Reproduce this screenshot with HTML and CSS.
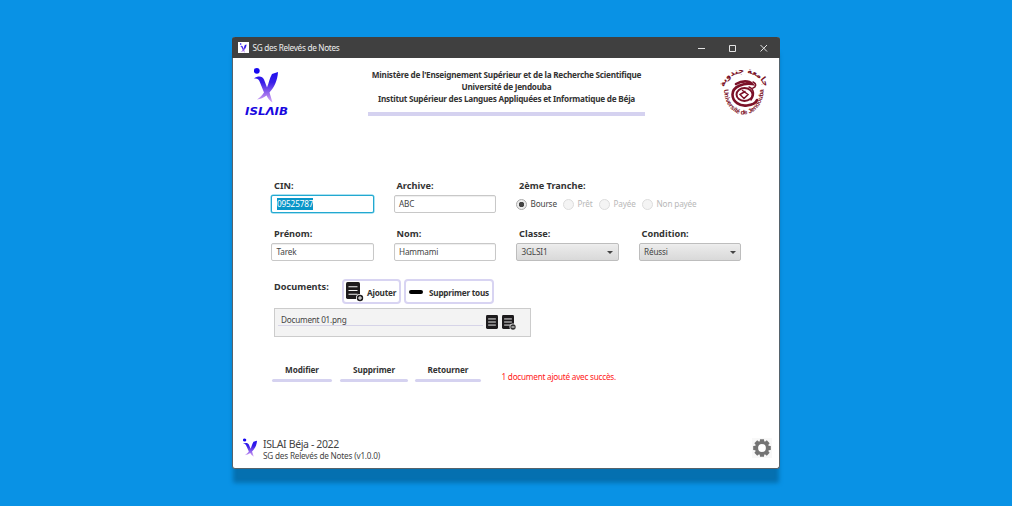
FILE: index.html
```html
<!DOCTYPE html>
<html lang="fr">
<head>
<meta charset="utf-8">
<title>SG des Relevés de Notes</title>
<link rel="stylesheet" href="styles.css">
</head>
<body>
<svg class="defs" width="0" height="0">
  <defs>
    <linearGradient id="fade" gradientUnits="userSpaceOnUse" x1="0" y1="2" x2="0" y2="36">
      <stop offset="0" stop-color="#1608f0"/><stop offset=".4" stop-color="#3a20e8"/><stop offset=".75" stop-color="#a070ee"/><stop offset="1" stop-color="#dcb4f6"/>
    </linearGradient>
    <symbol id="figure" viewBox="0 0 26 36">
      <circle cx="2.800" cy="3.800" r="2.900" fill="#1608f0"/>
      <path fill="url(#fade)" d="M0 11.500C4 8.500 8.500 9 10 12.500L13 20.500C15 16 15.500 11 18 7L24 5C23.500 14 20 20.500 15.500 25.500L18.500 35.500C15.500 33.500 13.500 31 12.500 28.500C9.500 31 6.500 32 3 32.500C6.500 30 8.500 28 10 25.500L6 15.500C5 12 3.500 11.200 0 11.500Z"/>
    </symbol>
    <symbol id="doc" viewBox="0 0 14 16" preserveAspectRatio="none">
      <rect width="14" height="16" rx="1.600" fill="#1d1b1d"/>
      <path d="M2.500 4.500H11.500M2.500 8H11.500M2.500 11.500H11.500" stroke="#f2f2f2" stroke-width="1.100"/>
    </symbol>
  </defs>
</svg>
<main class="window">
  <header class="titlebar">
    <span class="app-icon"><svg width="9" height="10"><use href="#figure"/></svg></span>
    <span class="title">SG des Relevés de Notes</span>
    <svg class="controls" width="72" height="10" fill="none" stroke="#e4e4e4"><path d="M1 5.500H8M32.500 2.500H38.500V8.500H32.500ZM63.500 2L70 8.500M70 2L63.500 8.500"/></svg>
  </header>
  <section class="banner">
    <div class="brand">
      <svg width="26" height="36"><use href="#figure"/></svg>
      <svg width="46" height="12"><text x="1" y="10" textLength="43" lengthAdjust="spacingAndGlyphs" class="wordmark">ISLΛIB</text></svg>
    </div>
    <div class="heading">
      <p>Ministère de l'Enseignement Supérieur et de la Recherche Scientifique</p>
      <p>Université de Jendouba</p>
      <p>Institut Supérieur des Langues Appliquées et Informatique de Béja</p>
    </div>
    <svg class="seal" width="44" height="52" viewBox="0 0 44 52">
      <defs>
        <path id="top-arc" d="M2 22A20 16 0 0 1 42 22"/>
        <path id="bottom-arc" d="M2 23A19.800 24.500 0 0 0 41.600 23"/>
      </defs>
      <text class="arabic"><textPath href="#top-arc" startOffset="50%" text-anchor="middle">جامعة جندوبة</textPath></text>
      <text class="latin"><textPath href="#bottom-arc" startOffset="50%" text-anchor="middle">Université de Jendouba</textPath></text>
      <g fill="none" stroke="#7b1128" stroke-linecap="round">
        <path stroke-width="2.600" d="M14 17C20 13.500 27 13.500 30 17C22 16 10.500 19 10.500 27.500C10.500 35 18 39.500 25 38.500C30 38 34 35.500 35 33"/>
        <ellipse cx="22.500" cy="27.500" rx="8" ry="6.500" stroke-width="2"/>
        <path stroke-width="1.500" d="M20.500 23.500L26 27.500L22 31.500L18 27.500L23 24.500M27 20C32 22 33 28 29 33M31 15C35 17 34 20 31 21"/>
      </g>
    </svg>
  </section>
  <section class="form">
    <div class="grid top">
      <div class="field"><label>CIN:</label><div class="input focus"><mark>09525787</mark></div></div>
      <div class="field"><label>Archive:</label><div class="input">ABC</div></div>
      <div class="field wide"><label>2ème Tranche:</label>
        <div class="radios">
          <span class="radio on"><i></i>Bourse</span><span class="radio pret"><i></i>Prêt</span><span class="radio payee"><i></i>Payée</span><span class="radio non"><i></i>Non payée</span>
        </div>
      </div>
    </div>
    <div class="grid">
      <div class="field"><label>Prénom:</label><div class="input">Tarek</div></div>
      <div class="field"><label>Nom:</label><div class="input">Hammami</div></div>
      <div class="field"><label>Classe:</label><div class="select">3GLSI1</div></div>
      <div class="field"><label>Condition:</label><div class="select">Réussi</div></div>
    </div>
    <div class="docs">
      <label>Documents:</label>
      <button class="add"><svg width="18" height="20"><use href="#doc" width="14" height="17"/><circle cx="14" cy="16" r="4" fill="#fff"/><circle cx="14" cy="16" r="3.200" fill="#1d1b1d"/><path d="M12 16H16M14 14V18" stroke="#fff"/></svg><span>Ajouter</span></button>
      <button class="clear"><i></i><span>Supprimer tous</span></button>
    </div>
    <div class="list">
      <span class="file">Document 01.png</span>
      <svg width="12" height="14"><use href="#doc"/></svg>
      <svg width="15" height="15"><use href="#doc" width="12" height="14"/><circle cx="11" cy="12" r="3.500" fill="#f3f3f3"/><circle cx="11" cy="12" r="2.700" fill="#333"/><path d="M9.500 12H12.500" stroke="#fff"/></svg>
    </div>
    <div class="actions">
      <button class="a1">Modifier</button><button class="a2">Supprimer</button><button class="a3">Retourner</button>
      <span class="status">1 document ajouté avec succès.</span>
    </div>
  </section>
  <footer>
    <svg width="14" height="19" viewBox="0 0 24 36" preserveAspectRatio="none"><use href="#figure" width="26" height="36"/></svg>
    <div class="about"><p class="org">ISLAI Béja - 2022</p><p class="version">SG des Relevés de Notes (v1.0.0)</p></div>
    <svg class="gear" width="20" height="20" viewBox="-10 -10 20 20"><rect x="-10" y="-10" width="20" height="20" fill="#f8f8f8"/><g fill="#747474"><path id="teeth" d="M-2-8.800H2L3 0L2 8.800H-2L-3 0Z"/><use href="#teeth" transform="rotate(45)"/><use href="#teeth" transform="rotate(90)"/><use href="#teeth" transform="rotate(135)"/><circle r="7"/></g><circle r="3.900" fill="#fff"/></svg>
  </footer>
</main>
</body>
</html>
```
FILE: styles.css
```css
* { box-sizing: border-box; }
body { margin: 0; height: 506px; padding: 37px 0 0 232px; background: #0992e5; font: 8.2px/12px "Noto Sans", "Open Sans", sans-serif; color: #444; overflow: hidden; }
p { margin: 0; }
.defs { display: block; height: 0; }
.window { width: 548px; height: 432px; display: flex; flex-direction: column; background: #fff; border: 1px solid #55636c; border-top: 0; border-radius: 3px; box-shadow: 0 15px 4px -1px #0570b0; }
.titlebar { height: 21px; margin: 0 -1px; padding: 0 11px 0 6px; display: flex; align-items: center; background: #404040; color: #eee; border-radius: 3px 3px 0 0; }
.app-icon { width: 11px; height: 11px; background: #fff; display: grid; place-items: center; margin-right: 3.5px; }
.title { letter-spacing: -.3px; }
.controls { margin-left: auto; }
.banner { display: flex; height: 62px; }
.brand { width: 60px; padding: 9px 0 0 11px; }
.brand svg { display: block; margin-left: 10px; }
.brand svg + svg { margin: 2px 0 0; }
.wordmark { font: italic bold 11px "DejaVu Sans", sans-serif; fill: #1908df; }
.heading { width: 277px; margin-left: 75px; height: 58px; padding-top: 11px; border-bottom: 4px solid #d5d2f0; text-align: center; font-weight: 700; line-height: 12px; letter-spacing: -.24px; color: #333; white-space: nowrap; }
.seal { margin: 9px 0 0 77px; overflow: visible; }
.arabic { font: bold 8px "DejaVu Sans", sans-serif; fill: #7b1128; }
.latin { font: bold 6.500px "Liberation Sans", sans-serif; letter-spacing: -.15px; fill: #7b1128; }
.form { padding: 58px 0 0 38px; }
.grid { display: grid; grid-template-columns: repeat(4, 102.5px); column-gap: 20px; height: 48px; }
.wide { grid-column: span 2; }
label { display: block; font-weight: 700; font-size: 9.200px; line-height: 14px; color: #333; padding-left: 3px; white-space: nowrap; }
.field label { padding-top: 1px; height: 14px; }
.input, .select { height: 18px; margin-top: 3px; border: 1px solid #c8c8c8; border-radius: 2px; padding: 0 4.5px; line-height: 16px; background: #fff; box-shadow: inset 0 1px 1px #eee; color: #444; letter-spacing: -.15px; }
.input.focus { border-color: #22a8d0; box-shadow: 0 0 0 .5px #59c5e4; padding-left: 5px; }
mark { background: #0996c9; color: #fff; display: inline-block; line-height: 12px; }
.select { display: flex; align-items: center; justify-content: space-between; background: linear-gradient(#ececec, #d9d9d9); border-color: #bdbdbd; }
.select::after { content: ""; border: 3px solid transparent; border-top-color: #444; border-bottom: 0; }
.radios { display: flex; margin-top: 6px; height: 12px; white-space: nowrap; }
.radio { display: flex; align-items: center; gap: 3.5px; color: #b8b8b8; letter-spacing: -.15px; }
.radio i { width: 11px; height: 11px; flex: none; border: 1px solid #ddd; border-radius: 50%; background: #f4f4f4; }
.on { color: #444; width: 47px; }
.on i { border-color: #aaa; background: radial-gradient(circle, #444 0 2.500px, #ececec 3px); }
.pret { width: 36px; }
.payee { width: 43px; }
.docs { display: flex; height: 34px; padding-top: 6px; }
.docs label { width: 71px; }
button { font: bold 8.200px/12px "Noto Sans", sans-serif; letter-spacing: -.1px; color: #333; background: #fff; border: 0; padding: 0; white-space: nowrap; }
.docs button { height: 25px; display: flex; align-items: center; border: 2px solid #d8d4f2; border-radius: 4px; margin-top: -1px; }
.docs button span { padding-top: 2px; }
.docs .add { width: 59px; padding-left: 2px; gap: 3px; letter-spacing: -.2px; }
.docs .clear { width: 90px; margin-left: 3px; padding-left: 3px; gap: 6px; letter-spacing: -.22px; }
.clear i { width: 14px; height: 4px; border-radius: 2px; background: #000; }
.list { width: 257px; height: 29px; margin-left: 3px; background: #f3f3f3; border: 1px solid #ccc; display: flex; padding: 6px 0 0 3px; }
.file { width: 205px; height: 11px; padding-left: 3px; border-bottom: 1px solid #d6d4e8; line-height: 10px; letter-spacing: -.24px; margin-right: 3px; }
.list svg + svg { margin-left: 4px; }
.actions { display: flex; margin: 26px 0 0 1px; }
.actions button { height: 20px; padding-bottom: 1px; }
.actions button::after { content: ""; display: block; height: 3px; margin-top: 3px; border-radius: 2px; background: #d5d2f0; }
.a1 { width: 60px; }
.a2 { width: 68px; margin-left: 8px; }
.a3 { width: 66px; margin-left: 7px; }
.status { margin: 8px 0 0 20.5px; color: #ff1818; letter-spacing: -.24px; }
footer { display: flex; margin: auto 7px 5px 10px; height: 26px; }
footer > svg:first-child { margin-top: 1px; }
.about { margin-left: 6px; flex: 1; }
.org { font-size: 10.500px; line-height: 14px; letter-spacing: -.36px; }
.version { line-height: 10px; letter-spacing: -.2px; }
.gear { margin-top: 1px; }
```
